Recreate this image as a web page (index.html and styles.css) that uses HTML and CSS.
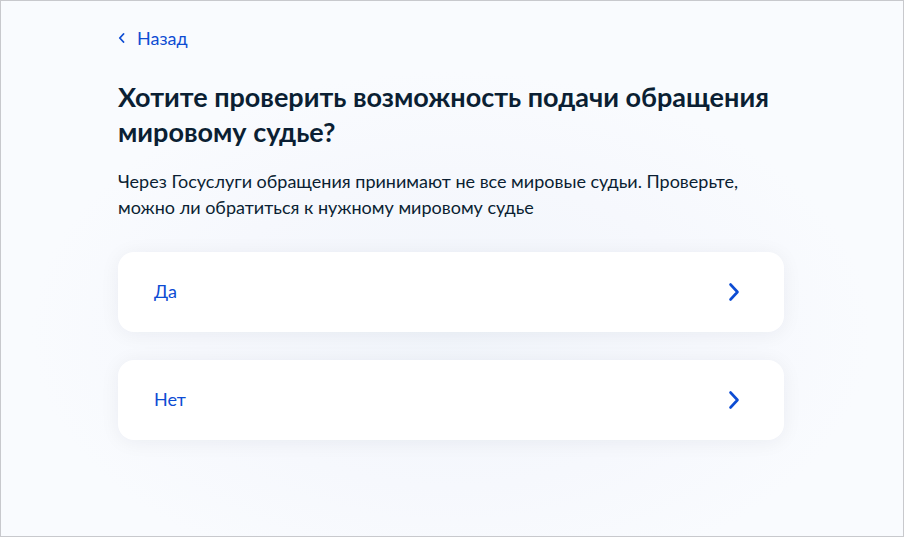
FILE: index.html
```html
<!DOCTYPE html>
<html lang="ru">
<head>
<meta charset="utf-8">
<title>Мировой судья</title>
<link rel="stylesheet" href="styles.css">
</head>
<body>
<div class="page">
  <main class="container">
    <a class="back" href="#">
      <svg class="back-icon" width="7" height="10" viewBox="0 0 7 10" aria-hidden="true"><path d="M5.5 1 L1.8 5 L5.5 9" fill="none" stroke="#0d4cd3" stroke-width="1.8" stroke-linecap="round" stroke-linejoin="round"/></svg>
      <span>Назад</span>
    </a>
    <h1 class="title">Хотите проверить возможность подачи обращения мировому судье?</h1>
    <p class="lead">Через Госуслуги обращения принимают не все мировые судьи. Проверьте, можно ли обратиться к нужному мировому судье</p>
    <div class="options">
      <a class="option" href="#">
        <span class="option-text">Да</span>
        <svg class="chev" width="12" height="20" viewBox="0 0 12 20" aria-hidden="true"><path d="M2.5 2.5 L9.5 10 L2.5 17.5" fill="none" stroke="#0d4cd3" stroke-width="2.6" stroke-linecap="round" stroke-linejoin="round"/></svg>
      </a>
      <a class="option" href="#">
        <span class="option-text">Нет</span>
        <svg class="chev" width="12" height="20" viewBox="0 0 12 20" aria-hidden="true"><path d="M2.5 2.5 L9.5 10 L2.5 17.5" fill="none" stroke="#0d4cd3" stroke-width="2.6" stroke-linecap="round" stroke-linejoin="round"/></svg>
      </a>
    </div>
  </main>
</div>
</body>
</html>
```

FILE: styles.css
```css
* { box-sizing: border-box; }
html, body { margin: 0; padding: 0; }
body {
  font-family: Lato, "Noto Sans", sans-serif;
  color: #0b1f33;
  background: #f9fbfe;
}
.page {
  width: 904px;
  height: 537px;
  border: 1px solid #c8c9cd;
  padding-right: 2px;
  background: radial-gradient(ellipse 420px 260px at 450px 330px, #f1f5fb 0%, #f6f8fd 60%, #f9fbfe 100%);
  overflow: hidden;
}
.container {
  width: 666px;
  margin: 0 auto;
  padding-top: 25px;
}
.back {
  display: inline-flex;
  align-items: center;
  gap: 12px;
  color: #0d4cd3;
  text-decoration: none;
  font-size: 18px;
  line-height: 24px;
}
.back-icon { display: block; }
.title {
  margin: 29px 0 0;
  font-size: 27px;
  line-height: 35px;
  font-weight: 700;
  max-width: 660px;
}
.lead {
  margin: 19px 0 0;
  font-size: 18px;
  line-height: 26px;
}
.options {
  margin-top: 32px;
  display: flex;
  flex-direction: column;
  gap: 28px;
}
.option {
  display: flex;
  align-items: center;
  justify-content: space-between;
  height: 80px;
  padding: 0 44px 0 36px;
  background: #fff;
  border-radius: 16px;
  box-shadow: 0 2px 20px rgba(11, 31, 51, 0.06);
  color: #0d4cd3;
  text-decoration: none;
  font-size: 18px;
  line-height: 24px;
}
.option-text { margin-top: -2px; }
.chev { display: block; }
```
